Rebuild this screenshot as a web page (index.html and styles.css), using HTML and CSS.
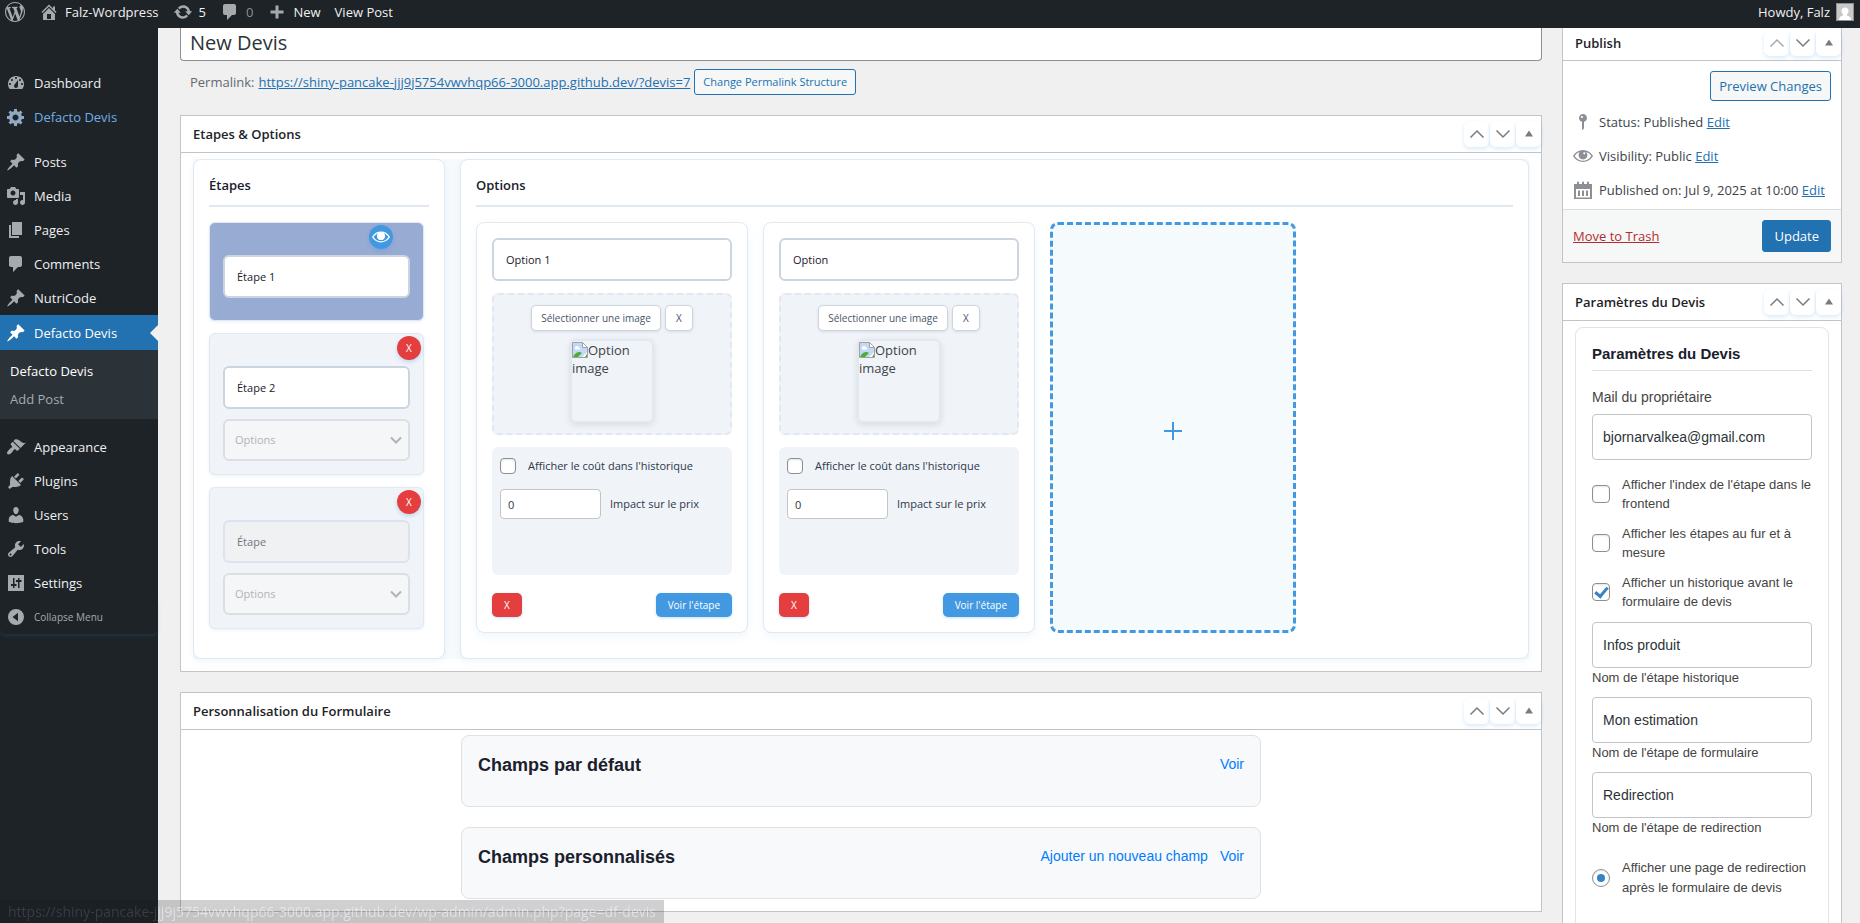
FILE: index.html
```html
<!DOCTYPE html>
<html lang="fr">
<head>
<meta charset="utf-8">
<title>New Devis</title>
<link rel="stylesheet" href="styles.css">
</head>
<body>
<svg class="defs" aria-hidden="true">
  <symbol id="i-wp" viewBox="0 0 20 20"><path d="M20 10c0-5.51-4.49-10-10-10C4.48 0 0 4.49 0 10c0 5.52 4.48 10 10 10 5.51 0 10-4.48 10-10zM7.78 15.37L4.37 6.22c.55-.02 1.17-.08 1.17-.08.5-.06.44-1.13-.06-1.11 0 0-1.45.11-2.37.11-.18 0-.37 0-.58-.01C4.12 2.69 6.87 1.11 10 1.11c2.33 0 4.45.87 6.05 2.34-.68-.11-1.65.39-1.65 1.58 0 .74.45 1.36.9 2.1.35.61.55 1.36.55 2.46 0 1.49-1.4 5-1.4 5l-3.03-8.37c.54-.02.82-.17.82-.17.5-.05.44-1.25-.06-1.22 0 0-1.44.12-2.38.12-.87 0-2.33-.12-2.33-.12-.5-.03-.56 1.2-.06 1.22l.92.08 1.26 3.41zM17.41 10c.24-.64.74-1.87.43-4.25.7 1.29 1.05 2.71 1.05 4.25 0 3.29-1.73 6.24-4.4 7.78.97-2.59 1.94-5.2 2.92-7.78zM6.1 18.09C3.12 16.65 1.11 13.53 1.11 10c0-1.3.23-2.48.72-3.59C3.25 10.3 4.67 14.2 6.1 18.09zm4.03-6.63l2.58 6.98c-.86.29-1.76.45-2.71.45-.79 0-1.57-.11-2.29-.33.81-2.38 1.62-4.74 2.42-7.1z"/></symbol>
  <symbol id="i-home" viewBox="0 0 20 20"><path d="M16 8.5l1.53 1.53-1.06 1.06L10 4.6l-6.47 6.49-1.06-1.06L10 2.5l4 4v-2h2v4zm-6-2.46l6 5.99V18H4v-5.97zM12 17v-5H8v5h4z"/></symbol>
  <symbol id="i-update" viewBox="0 0 20 20"><path d="M10.2 3.28c3.53 0 6.43 2.61 6.92 6h2.08l-3.5 4-3.5-4h2.32c-.45-1.97-2.21-3.45-4.32-3.45-1.45 0-2.73.71-3.54 1.78L4.95 5.66C6.23 4.2 8.11 3.28 10.2 3.28zm-.4 13.44c-3.52 0-6.43-2.61-6.92-6H.8l3.5-4c1.17 1.33 2.33 2.67 3.5 4H5.48c.45 1.97 2.21 3.45 4.32 3.45 1.45 0 2.73-.71 3.54-1.78l1.71 1.95c-1.28 1.46-3.15 2.38-5.25 2.38z"/></symbol>
  <symbol id="i-comment" viewBox="0 0 20 20"><path d="M5 2h9c1.1 0 2 .9 2 2v7c0 1.1-.9 2-2 2h-2l-5 5v-5H5c-1.1 0-2-.9-2-2V4c0-1.1.9-2 2-2z"/></symbol>
  <symbol id="i-plus" viewBox="0 0 20 20"><path d="M8.5 3.5h3v5h5v3h-5v5h-3v-5h-5v-3h5z"/></symbol>
  <symbol id="i-dash" viewBox="0 0 20 20"><path fill-rule="evenodd" d="M3.76 16h12.48c1.1-1.37 1.76-3.11 1.76-5 0-4.42-3.58-8-8-8s-8 3.58-8 8c0 1.89.66 3.63 1.76 5zM10 4c.55 0 1 .45 1 1s-.45 1-1 1-1-.45-1-1 .45-1 1-1zM6 6c.55 0 1 .45 1 1s-.45 1-1 1-1-.45-1-1 .45-1 1-1zm8 0c.55 0 1 .45 1 1s-.45 1-1 1-1-.45-1-1 .45-1 1-1zm-5.37 5.55L12 7v6c0 1.1-.9 2-2 2s-2-.9-2-2c0-.57.24-1.08.63-1.45zM4 10c.55 0 1 .45 1 1s-.45 1-1 1-1-.45-1-1 .45-1 1-1zm12 0c.55 0 1 .45 1 1s-.45 1-1 1-1-.45-1-1 .45-1 1-1z"/></symbol>
  <symbol id="i-gear" viewBox="0 0 20 20"><path fill-rule="evenodd" d="M18 12h-2.18c-.17.7-.44 1.35-.81 1.93l1.54 1.54-2.1 2.1-1.54-1.54c-.58.36-1.23.63-1.91.79V19H8v-2.18c-.68-.16-1.33-.43-1.91-.79l-1.54 1.54-2.12-2.12 1.54-1.54c-.36-.58-.63-1.23-.79-1.91H1V9.03h2.17c.16-.7.44-1.35.8-1.94L2.43 5.55l2.1-2.1 1.54 1.54c.58-.37 1.24-.64 1.93-.81V2h3v2.18c.68.16 1.33.43 1.91.79l1.54-1.54 2.12 2.12-1.54 1.54c.36.59.64 1.24.8 1.94H18V12zm-8.5 1.5c1.66 0 3-1.34 3-3s-1.34-3-3-3-3 1.34-3 3 1.34 3 3 3z"/></symbol>
  <symbol id="i-pin" viewBox="0 0 20 20"><path d="M10.44 3.02l1.82-1.82 6.36 6.35-1.83 1.82c-1.05-.68-2.48-.57-3.41.36l-.75.75c-.92.93-1.04 2.35-.35 3.41l-1.83 1.82-2.41-2.41-2.8 2.79c-.42.42-3.38 2.71-3.8 2.29s1.86-3.39 2.28-3.81l2.79-2.79L4.1 9.36l1.83-1.82c1.05.69 2.48.57 3.4-.36l.75-.75c.93-.92 1.05-2.35.36-3.41z"/></symbol>
  <symbol id="i-media" viewBox="0 0 20 20"><path fill-rule="evenodd" d="M13 11V4c0-.55-.45-1-1-1h-1.67L9 1H5L3.67 3H2c-.55 0-1 .45-1 1v7c0 .55.45 1 1 1h10c.55 0 1-.45 1-1zM7 4.5c1.38 0 2.5 1.12 2.5 2.5S8.38 9.5 7 9.5 4.5 8.38 4.5 7 5.62 4.5 7 4.5zM14 6h5v10.5c0 1.38-1.12 2.5-2.5 2.5S14 17.88 14 16.5s1.12-2.5 2.5-2.5c.17 0 .34.02.5.05V9h-3V6zm-4 8.05V13h2v3.5c0 1.38-1.12 2.5-2.5 2.5S7 17.88 7 16.5 8.12 14 9.5 14c.17 0 .34.02.5.05z"/></symbol>
  <symbol id="i-page" viewBox="0 0 20 20"><path d="M6 15V2h10v13H6zm-1 1h8v2H3V5h2v11z"/></symbol>
  <symbol id="i-brush" viewBox="0 0 20 20"><path d="M14.48 11.06L7.41 3.99l1.5-1.5c.5-.56 2.3-.47 3.51.32 1.21.8 1.43 1.28 2.91 2.1 1.18.64 2.45 1.26 4.45.85zm-.71.71L6.7 4.7 4.93 6.47c-.39.39-.39 1.02 0 1.41l1.06 1.06c.39.39.39 1.03 0 1.42-.6.6-1.43 1.11-2.21 1.69-.35.26-.7.53-1.01.84C1.43 14.23.4 16.08 1.4 17.07c.99 1 2.84-.03 4.18-1.36.31-.31.58-.66.85-1.02.57-.78 1.08-1.61 1.69-2.21.39-.39 1.02-.39 1.41 0l1.06 1.06c.39.39 1.02.39 1.41 0z"/></symbol>
  <symbol id="i-plug" viewBox="0 0 20 20"><path d="M13.11 4.36L9.87 7.6 8 5.73l3.24-3.24c.35-.34 1.05-.2 1.56.32.52.51.66 1.21.31 1.55zm-8 1.77l.91-1.12 9.01 9.01-1.19.84c-.71.71-2.63 1.16-3.82 1.16H6.14L4.9 17.26c-.59.59-1.54.59-2.12 0-.59-.58-.59-1.53 0-2.12l1.24-1.24v-3.88c0-1.13.4-3.19 1.09-3.89zm7.26 3.97l3.24-3.24c.34-.35 1.04-.21 1.55.31.52.51.66 1.21.31 1.55l-3.24 3.25z"/></symbol>
  <symbol id="i-user" viewBox="0 0 20 20"><path d="M10 9.25c-2.27 0-2.73-3.44-2.73-3.44C7 4.02 7.82 2 9.97 2c2.16 0 2.98 2.02 2.71 3.81 0 0-.41 3.44-2.68 3.44zm0 2.57L12.72 10c2.39 0 4.52 2.33 4.52 4.53v2.49s-3.65 1.13-7.24 1.13c-3.65 0-7.24-1.13-7.24-1.13v-2.49c0-2.25 1.94-4.48 4.47-4.48z"/></symbol>
  <symbol id="i-tool" viewBox="0 0 20 20"><path fill-rule="evenodd" d="M16.68 9.77c-1.34 1.34-3.3 1.67-4.95.99l-5.41 6.52c-.99.99-2.59.99-3.58 0s-.99-2.59 0-3.57l6.52-5.42c-.68-1.65-.35-3.61.99-4.95 1.28-1.28 3.12-1.62 4.72-1.06l-2.89 2.89 2.82 2.82 2.86-2.87c.53 1.58.18 3.39-1.08 4.65zM3.81 16.21c.4.39 1.04.39 1.43 0 .4-.4.4-1.04 0-1.43-.39-.4-1.03-.4-1.43 0-.39.39-.39 1.03 0 1.43z"/></symbol>
  <symbol id="i-sliders" viewBox="0 0 20 20"><path fill-rule="evenodd" d="M2 2h16v16H2zM7 5v6H5v2h2v2h1.500v-2h2v-2h-2V5zm5 0v2h-2v2h2v6h1.500V9h2V7h-2V5z"/></symbol>
  <symbol id="i-collapse" viewBox="0 0 20 20"><path fill-rule="evenodd" d="M10 2a8 8 0 1 0 0 16 8 8 0 0 0 0-16zm2 3.800v8.400L6.500 10z"/></symbol>
  <symbol id="i-status" viewBox="0 0 20 20"><path fill-rule="evenodd" d="M14 6c0 1.860-1.280 3.410-3 3.860V16c0 1-2 2-2 2V9.860c-1.720-.45-3-2-3-3.860 0-2.210 1.790-4 4-4s4 1.790 4 4zM8 5c0 .55.45 1 1 1s1-.45 1-1-.45-1-1-1-1 .45-1 1z"/></symbol>
  <symbol id="i-eye" viewBox="0 0 20 20"><path fill-rule="evenodd" d="M19.7 9.400C17.700 6 14 3.900 10 3.900S2.300 6 .3 9.400L0 10l.3.600c2 3.400 5.700 5.500 9.700 5.500s7.700-2.100 9.700-5.500l.3-.6zM10 14.700c-3.300 0-6.500-1.700-8.300-4.700C3 7.900 5 6.400 7.200 5.700A4.300 4.300 0 1 0 12.800 5.700C15 6.400 17 7.900 18.300 10c-1.800 3-5 4.700-8.300 4.700z"/><circle cx="10" cy="9" r="4.300"/><circle cx="11.300" cy="7.300" r="1.100" class="glint"/></symbol>
  <symbol id="i-cal" viewBox="0 0 20 20"><path fill-rule="evenodd" d="M1 4h3V2.500a1 1 0 0 1 2 0V4h3V2.500a1 1 0 0 1 2 0V4h3V2.500a1 1 0 0 1 2 0V4h3v15H1zm2 5v8.500h14V9zm2 1.500h2V16H5zm4 0h2V16H9zm4 0h2V16h-2z"/></symbol>
  <symbol id="i-up" viewBox="0 0 16 16"><path class="line" d="M1.500 11.500 8 5l6.500 6.500"/></symbol>
  <symbol id="i-down" viewBox="0 0 16 16"><path class="line" d="M1.500 4.500 8 11l6.500-6.500"/></symbol>
  <symbol id="i-tri" viewBox="0 0 16 16"><path d="M4 10.500h8L8 4.500z"/></symbol>
  <symbol id="i-chev" viewBox="0 0 14 14"><path class="thick" d="m2 4.500 5 5 5-5"/></symbol>
  <symbol id="i-broken" viewBox="0 0 16 16"><path fill="#fff" stroke="#a0a0a0" d="M.5.500h10l5 5v10H.5z"/><path fill="#c3d9f7" d="M1 1h9v5h5v4l-5 5H1z"/><path fill="#fff" stroke="#a0a0a0" d="M10.500.500v5h5z"/><path fill="#fff" d="M3 6.500a2 2 0 0 1 4-1 1.500 1.500 0 0 1 1 2H3z"/><path fill="#4caf32" d="M1 15c2-4 4-5 7-5l2 1-4 4z"/><path fill="#4caf32" d="M13 15h2v-3z"/></symbol>
</svg>

<header class="adminbar">
  <a href="#" aria-label="WordPress"><svg class="ico"><use href="#i-wp"/></svg></a>
  <a href="#"><svg class="ico"><use href="#i-home"/></svg>Falz-Wordpress</a>
  <a href="#"><svg class="ico"><use href="#i-update"/></svg>5</a>
  <a href="#" class="dim"><svg class="ico"><use href="#i-comment"/></svg>0</a>
  <a href="#"><svg class="ico"><use href="#i-plus"/></svg>New</a>
  <a href="#">View Post</a>
  <a href="#" class="account">Howdy, Falz<svg class="avatar" viewBox="0 0 18 18"><rect width="18" height="18" fill="#8c8f94"/><path fill="#c8c8c8" d="M1 1h16v16H1z"/><circle cx="9" cy="8" r="3.500" fill="#fff"/><path fill="#fff" d="M3 17c0-3 2-4 4-4.500V10h4v2.500c2 .5 4 1.500 4 4.500z"/></svg></a>
</header>

<div class="shell">
  <nav class="sidebar" aria-label="Menu">
    <ul class="menu">
      <li><a href="#"><svg class="ico"><use href="#i-dash"/></svg>Dashboard</a></li>
      <li><a href="#" class="hover"><svg class="ico"><use href="#i-gear"/></svg>Defacto Devis</a></li>
      <li class="gap"><a href="#"><svg class="ico"><use href="#i-pin"/></svg>Posts</a></li>
      <li><a href="#"><svg class="ico"><use href="#i-media"/></svg>Media</a></li>
      <li><a href="#"><svg class="ico"><use href="#i-page"/></svg>Pages</a></li>
      <li><a href="#"><svg class="ico"><use href="#i-comment"/></svg>Comments</a></li>
      <li><a href="#"><svg class="ico"><use href="#i-pin"/></svg>NutriCode</a></li>
      <li><a href="#" class="current"><svg class="ico"><use href="#i-pin"/></svg>Defacto Devis</a>
        <ul class="submenu"><li><a href="#" class="on">Defacto Devis</a></li><li><a href="#">Add Post</a></li></ul></li>
      <li class="gap"><a href="#"><svg class="ico"><use href="#i-brush"/></svg>Appearance</a></li>
      <li><a href="#"><svg class="ico"><use href="#i-plug"/></svg>Plugins</a></li>
      <li><a href="#"><svg class="ico"><use href="#i-user"/></svg>Users</a></li>
      <li><a href="#"><svg class="ico"><use href="#i-tool"/></svg>Tools</a></li>
      <li><a href="#"><svg class="ico"><use href="#i-sliders"/></svg>Settings</a></li>
    </ul>
    <button type="button" class="collapse"><svg class="ico"><use href="#i-collapse"/></svg>Collapse Menu</button>
  </nav>

  <main class="content">
    <div class="primary">
      <input class="title" type="text" value="New Devis" aria-label="Title">
      <div class="permalink"><span>Permalink:</span> <a href="#">https://shiny-pancake-jjj9j5754vwvhqp66-3000.app.github.dev/?devis=7</a> <button type="button" class="btn small">Change Permalink Structure</button></div>

      <section class="box">
        <div class="box-head"><h2>Etapes &amp; Options</h2>
          <div class="tools"><button type="button" aria-label="Monter"><svg><use href="#i-up"/></svg></button><button type="button" aria-label="Descendre"><svg><use href="#i-down"/></svg></button><button type="button" aria-label="Replier"><svg><use href="#i-tri"/></svg></button></div></div>
        <div class="builder">
          <div class="panel steps">
            <h3>Étapes</h3>
            <div class="step active"><button type="button" class="round view" aria-label="Voir"><svg><use href="#i-eye"/></svg></button>
              <input type="text" class="field" value="Étape 1" aria-label="Étape 1"></div>
            <div class="step"><button type="button" class="round del">X</button>
              <input type="text" class="field" value="Étape 2" aria-label="Étape 2">
              <div class="pick"><select disabled aria-label="Options étape 2"><option>Options</option></select><svg><use href="#i-chev"/></svg></div></div>
            <div class="step"><button type="button" class="round del">X</button>
              <input type="text" class="field" value="Étape" disabled aria-label="Étape 3">
              <div class="pick"><select disabled aria-label="Options étape 3"><option>Options</option></select><svg><use href="#i-chev"/></svg></div></div>
          </div>
          <div class="panel options">
            <h3>Options</h3>
            <div class="cards">
              <article class="card">
                <input type="text" class="field" value="Option 1" aria-label="Nom de l'option 1">
                <div class="media">
                  <div class="media-btns"><button type="button">Sélectionner une image</button><button type="button">X</button></div>
                  <div class="thumb"><svg><use href="#i-broken"/></svg>Option image</div>
                </div>
                <div class="info">
                  <label class="cost"><input type="checkbox" class="tick">Afficher le coût dans l'historique</label>
                  <label class="price"><input type="text" value="0">Impact sur le prix</label>
                </div>
                <div class="actions"><button type="button" class="red">X</button><button type="button" class="blue">Voir l'étape</button></div>
              </article>
              <article class="card">
                <input type="text" class="field" value="Option" aria-label="Nom de l'option 2">
                <div class="media">
                  <div class="media-btns"><button type="button">Sélectionner une image</button><button type="button">X</button></div>
                  <div class="thumb"><svg><use href="#i-broken"/></svg>Option image</div>
                </div>
                <div class="info">
                  <label class="cost"><input type="checkbox" class="tick">Afficher le coût dans l'historique</label>
                  <label class="price"><input type="text" value="0">Impact sur le prix</label>
                </div>
                <div class="actions"><button type="button" class="red">X</button><button type="button" class="blue">Voir l'étape</button></div>
              </article>
              <button type="button" class="add" aria-label="Ajouter une option"><svg viewBox="0 0 18 18"><path d="M9 0v18M0 9h18"/></svg></button>
            </div>
          </div>
        </div>
      </section>

      <section class="box">
        <div class="box-head"><h2>Personnalisation du Formulaire</h2>
          <div class="tools"><button type="button" aria-label="Monter"><svg><use href="#i-up"/></svg></button><button type="button" aria-label="Descendre"><svg><use href="#i-down"/></svg></button><button type="button" aria-label="Replier"><svg><use href="#i-tri"/></svg></button></div></div>
        <div class="form-groups">
          <div class="group"><h3>Champs par défaut</h3><a href="#">Voir</a></div>
          <div class="group"><h3>Champs personnalisés</h3><a href="#">Ajouter un nouveau champ</a><a href="#">Voir</a></div>
        </div>
      </section>
    </div>

    <aside class="secondary">
      <section class="box publish">
        <div class="box-head"><h2>Publish</h2>
          <div class="tools"><button type="button" class="faded" aria-label="Monter"><svg><use href="#i-up"/></svg></button><button type="button" aria-label="Descendre"><svg><use href="#i-down"/></svg></button><button type="button" aria-label="Replier"><svg><use href="#i-tri"/></svg></button></div></div>
        <div class="preview"><button type="button" class="btn">Preview Changes</button></div>
        <ul class="facts">
          <li><svg class="ico"><use href="#i-status"/></svg><span>Status: Published <a href="#">Edit</a></span></li>
          <li><svg class="ico"><use href="#i-eye"/></svg><span>Visibility: Public <a href="#">Edit</a></span></li>
          <li><svg class="ico"><use href="#i-cal"/></svg><span>Published on: Jul 9, 2025 at 10:00 <a href="#">Edit</a></span></li>
        </ul>
        <div class="publish-foot"><a href="#">Move to Trash</a><button type="button" class="btn primary-btn">Update</button></div>
      </section>

      <section class="box">
        <div class="box-head"><h2>Paramètres du Devis</h2>
          <div class="tools"><button type="button" aria-label="Monter"><svg><use href="#i-up"/></svg></button><button type="button" aria-label="Descendre"><svg><use href="#i-down"/></svg></button><button type="button" aria-label="Replier"><svg><use href="#i-tri"/></svg></button></div></div>
        <div class="settings">
          <h3>Paramètres du Devis</h3>
          <label class="mail" for="mail">Mail du propriétaire</label>
          <input type="text" id="mail" class="text" value="bjornarvalkea@gmail.com">
          <div class="checks">
            <label class="check"><input type="checkbox" class="tick"><span>Afficher l'index de l'étape dans le frontend</span></label>
            <label class="check"><input type="checkbox" class="tick"><span>Afficher les étapes au fur et à mesure</span></label>
            <label class="check"><input type="checkbox" class="tick" checked><span>Afficher un historique avant le formulaire de devis</span></label>
          </div>
          <div class="named"><input type="text" id="n1" class="text" value="Infos produit"><label for="n1">Nom de l'étape historique</label></div>
          <div class="named"><input type="text" id="n2" class="text" value="Mon estimation"><label for="n2">Nom de l'étape de formulaire</label></div>
          <div class="named"><input type="text" id="n3" class="text" value="Redirection"><label for="n3">Nom de l'étape de redirection</label></div>
          <div class="radios">
            <label class="check"><input type="radio" name="end" class="dot" checked><span>Afficher une page de redirection après le formulaire de devis</span></label>
            <label class="check"><input type="radio" name="end" class="dot"><span>Rediriger vers la page</span></label>
          </div>
        </div>
      </section>
    </aside>
  </main>
</div>
<div class="statusbar">https://shiny-pancake-jjj9j5754vwvhqp66-3000.app.github.dev/wp-admin/admin.php?page=df-devis</div>
</body>
</html>
```
FILE: styles.css
```css
* { box-sizing: border-box; }
body {
  margin: 0;
  height: 100vh;
  overflow: hidden;
  display: flex;
  flex-direction: column;
  background: #f0f0f1;
  color: #3c434a;
  font: 13px/18px "Open Sans", "Noto Sans", sans-serif;
}
ul { list-style: none; margin: 0; padding: 0; }
h2, h3 { margin: 0; }
button, input, select { font: inherit; color: inherit; margin: 0; }
button { cursor: pointer; }
a { color: #2271b1; }
svg { display: block; flex: none; fill: currentColor; }
.defs { position: absolute; width: 0; height: 0; }
.ico { width: 20px; height: 20px; }
.glint { fill: #fff; }
.line { fill: none; stroke: currentColor; stroke-width: 1.5; }
.thick { fill: none; stroke: currentColor; stroke-width: 2; }

/* Top bar */
.adminbar {
  flex: none;
  height: 28px;
  display: flex;
  gap: 14px;
  padding: 0 6px 4px 5px;
  background: #1d2327;
}
.adminbar a { display: flex; align-items: center; gap: 6px; color: #f0f0f1; text-decoration: none; }
.adminbar .ico { color: #a7aaad; }
.adminbar .dim { color: #8c8f94; }
.adminbar .account { margin-left: auto; }
.avatar { width: 18px; height: 18px; }

.shell { flex: 1; min-height: 0; display: flex; }

/* Side menu */
.sidebar { flex: none; width: 158px; padding-top: 38px; background: #1d2327; }
.menu > li > a, .collapse {
  position: relative;
  display: flex;
  align-items: center;
  gap: 8px;
  height: 34px;
  padding: 0 6px;
  color: #f0f0f1;
  text-decoration: none;
}
.menu .ico, .collapse .ico { color: #a7aaad; }
.menu .gap { margin-top: 11px; }
.menu > li > a.hover { color: #72aee6; }
.menu .hover .ico { color: #8fa8c4; }
.menu > li > a.current { height: 35px; background: #2271b1; color: #fff; }
.menu .current .ico { color: #fff; }
.current::after {
  content: "";
  position: absolute;
  right: 0;
  top: 10px;
  border: 8px solid transparent;
  border-left: 0;
  border-right-color: #f0f0f1;
}
.submenu { padding: 7px 0 6px; background: #2c3338; }
.submenu a { display: block; padding: 5px 10px; color: #a7aaad; text-decoration: none; }
.submenu .on { color: #fff; }
.collapse {
  width: 100%;
  border: 0;
  border-radius: 0 0 6px 6px;
  background: none;
  color: #a7aaad;
  font-size: 10px;
  box-shadow: 0 2px 4px rgba(66, 153, 225, .15);
}

/* Page columns */
.content { flex: 1; min-width: 0; display: flex; align-items: flex-start; gap: 20px; padding: 0 18px 0 22px; }
.primary { flex: 1; min-width: 0; }
.secondary { flex: none; width: 280px; }

.title {
  display: block;
  width: 100%;
  height: 33px;
  padding: 0 9px 4px;
  border: 1px solid #8c8f94;
  border-top: 0;
  border-radius: 0 0 4px 4px;
  background: #fff;
  color: #2c3338;
  font-size: 20px;
}
.permalink { display: flex; align-items: center; gap: 4px; height: 42px; margin-bottom: 12px; padding-left: 10px; color: #646970; }

.btn {
  height: 30px;
  padding: 0 8px;
  border: 1px solid #2271b1;
  border-radius: 3px;
  background: #f6f7f7;
  color: #2271b1;
}
.btn.small { height: 26px; font-size: 11px; }
.btn.primary-btn { height: 32px; padding: 0 11px; background: #2271b1; color: #fff; }

/* Meta boxes */
.box { margin-bottom: 20px; border: 1px solid #c3c4c7; background: #fff; }
.box-head {
  display: flex;
  align-items: center;
  justify-content: space-between;
  height: 37px;
  padding-left: 12px;
  border-bottom: 1px solid #c3c4c7;
}
.box-head h2 { color: #1d2327; font-size: 13px; font-weight: 600; }
.tools { display: flex; gap: 1px; }
.tools button {
  display: grid;
  place-items: center;
  width: 25px;
  height: 26px;
  padding: 0;
  border: 0;
  border-radius: 6px;
  background: #fff;
  color: #787c82;
  box-shadow: 0 2px 4px rgba(66, 153, 225, .2);
}
.tools svg { width: 16px; height: 16px; }
.tools .faded { color: #a7aaad; }

/* Builder */
.builder { display: flex; gap: 15px; margin: 6px 12px 12px; background: #f7fafc; }
.panel {
  padding: 15px;
  border: 1px solid #e2e8f0;
  border-radius: 8px;
  background: #fff;
  box-shadow: 0 2px 6px rgba(66, 153, 225, .1);
}
.panel h3 {
  margin-bottom: 15px;
  padding-bottom: 10px;
  border-bottom: 2px solid #e2e8f0;
  color: #1a202c;
  font-size: 13px;
  line-height: 20px;
  font-weight: 600;
}
.steps { flex: none; width: 252px; min-height: 500px; }
.options { flex: 1; min-width: 0; }
.step {
  position: relative;
  display: flex;
  flex-direction: column;
  gap: 10px;
  width: 215px;
  margin-bottom: 12px;
  padding: 32px 13px 13px;
  border: 1px solid #e2e8f0;
  border-radius: 6px;
  background: #f0f4f9;
  box-shadow: 0 1px 3px rgba(66, 153, 225, .12);
}
.step.active { background: #98abd3; padding-bottom: 22px; }
.field {
  width: 100%;
  height: 43px;
  padding: 0 12px;
  border: 2px solid #cbd5e0;
  border-radius: 6px;
  background: #fff;
  color: #1a202c;
  font-size: 11px;
}
.field:disabled { border-color: #dbe4ee; background: #f0f1f3; color: #6f7780; }
.pick { position: relative; color: #b0b4b8; }
.pick select {
  display: block;
  width: 100%;
  height: 42px;
  padding: 0 10px;
  border: 2px solid #dcdfe2;
  border-radius: 6px;
  background: #f5f6f8;
  appearance: none;
  opacity: 1;
  color: #b0b4b8;
  font-size: 11px;
}
.pick svg { position: absolute; right: 7px; top: 14px; width: 14px; height: 14px; }
.round {
  position: absolute;
  top: 2px;
  right: 2px;
  display: grid;
  place-items: center;
  width: 24px;
  height: 24px;
  padding: 0;
  border: 0;
  border-radius: 50%;
  color: #fff;
  font-size: 10px;
  box-shadow: 0 2px 4px rgba(66, 153, 225, .3);
}
.round svg { width: 18px; height: 18px; }
.round.del { background: #e53e3e; }
.round.view { right: 30px; background: #4299e1; }
.view .glint { fill: #4299e1; }

.cards { display: flex; gap: 15px; }
.card {
  width: 272px;
  padding: 15px;
  border: 1px solid #e2e8f0;
  border-radius: 8px;
  background: #fff;
  box-shadow: 0 4px 8px rgba(66, 153, 225, .08);
}
.media {
  display: flex;
  flex-direction: column;
  align-items: center;
  gap: 8px;
  margin: 12px 0;
  padding: 10px;
  border: 2px dashed #e2e8f0;
  border-radius: 6px;
  background: #f0f4f9;
}
.media-btns { display: flex; gap: 4px; }
.media-btns button {
  min-width: 28px;
  height: 26px;
  padding: 0 9px;
  border: 1px solid #cbd5e0;
  border-radius: 5px;
  background: #fff;
  color: #4a5568;
  font-size: 10px;
  box-shadow: 0 1px 3px rgba(0, 0, 0, .1);
}
.thumb {
  width: 84px;
  height: 84px;
  border: 2px solid #e2e8f0;
  border-radius: 6px;
  box-shadow: 0 2px 6px rgba(0, 0, 0, .1);
}
.thumb svg { display: inline-block; width: 16px; height: 16px; vertical-align: -3px; }
.info { height: 128px; padding: 10px 8px; border-radius: 6px; background: #f0f4f9; color: #2d3748; font-size: 11px; }
.cost { display: flex; align-items: center; gap: 12px; margin-bottom: 14px; }
.price { display: flex; align-items: center; gap: 9px; }
.price input { width: 101px; height: 30px; padding: 0 7px; border: 1px solid #c3c4c7; border-radius: 4px; background: #fff; }
.actions { display: flex; justify-content: space-between; margin-top: 18px; }
.actions button {
  min-width: 30px;
  height: 24px;
  padding: 0 12px;
  border: 0;
  border-radius: 5px;
  color: #fff;
  font-size: 10px;
  box-shadow: 0 1px 3px rgba(66, 153, 225, .3);
}
.actions .red { background: #e53e3e; }
.actions .blue { background: #4299e1; }
.add {
  display: grid;
  place-items: center;
  width: 246px;
  padding: 6px 0 0;
  border: 3px dashed #4299e1;
  border-radius: 8px;
  background: #f5fafd;
  color: #4299e1;
}
.add svg { width: 18px; height: 18px; stroke: currentColor; stroke-width: 2; }

/* Check boxes and radios */
.tick, .dot {
  flex: none;
  display: grid;
  place-items: center;
  width: 16px;
  height: 16px;
  border: 1px solid #8c8f94;
  border-radius: 4px;
  background: #fff;
  appearance: none;
  box-shadow: inset 0 1px 2px rgba(0, 0, 0, .1);
}
.dot { border-radius: 50%; }
.check .tick, .check .dot { width: 18px; height: 18px; }
.tick:checked::before {
  content: "";
  width: 10px;
  height: 5px;
  margin-bottom: 3px;
  border: solid #3582c4;
  border-width: 0 0 3px 3px;
  transform: rotate(-50deg);
}
.dot:checked::before { content: ""; width: 8px; height: 8px; border-radius: 50%; background: #3582c4; }

/* Form groups */
.form-groups { display: flex; flex-direction: column; gap: 20px; max-width: 800px; margin: 5px auto 12px; font: 14px/20px "Liberation Sans", Arial, sans-serif; }
.group {
  display: flex;
  align-items: flex-start;
  gap: 12px;
  height: 72px;
  padding: 18px 16px;
  border: 1px solid #dee2e6;
  border-radius: 8px;
  background: #f8f9fa;
}
.group h3 { flex: 1; color: #1a202c; font-size: 18px; line-height: 22px; }
.group a { color: #007bff; text-decoration: none; }

/* Publish */
.publish { border-top: 0; }
.publish .box-head { height: 33px; padding-bottom: 2px; }
.preview { display: flex; justify-content: flex-end; padding: 10px 10px 4px; }
.facts li { display: flex; align-items: center; gap: 6px; height: 34px; padding: 0 10px; }
.facts { padding-bottom: 2px; }
.facts .ico { color: #8c8f94; }
.publish-foot {
  display: flex;
  align-items: center;
  justify-content: space-between;
  height: 53px;
  padding: 0 10px;
  border-top: 1px solid #dcdcde;
  background: #f6f7f7;
}
.publish-foot a { color: #b32d2e; }

/* Settings */
.settings {
  margin: 6px 12px 12px;
  padding: 16px;
  border: 1px solid #e2e4e7;
  border-radius: 8px;
  color: #444;
  font: 13px/19px "Liberation Sans", Arial, sans-serif;
}
.settings h3 { padding-bottom: 6px; border-bottom: 1px solid #dcdfe3; color: #1a202c; font-size: 15px; line-height: 20px; }
.mail { display: block; margin: 16px 0 7px; font-size: 14px; line-height: 20px; }
.text {
  display: block;
  width: 100%;
  height: 46px;
  padding: 0 10px;
  border: 1px solid #c3c4c7;
  border-radius: 4px;
  background: #fff;
  color: #2c3338;
  font-size: 14px;
}
.checks { display: flex; flex-direction: column; gap: 11px; margin: 15px 0 11px; }
.check { display: flex; align-items: center; gap: 12px; }
.named { margin-bottom: 9px; }
.named label { display: block; line-height: 20px; }
.radios { display: flex; flex-direction: column; gap: 20px; margin-top: 20px; line-height: 20px; }
.radios .check { min-height: 40px; }
.radios span { align-self: flex-start; }

/* Link target hint */
.statusbar {
  position: fixed;
  left: 0;
  bottom: 0;
  height: 23px;
  padding: 0 8px;
  background:
    linear-gradient(90deg, rgba(235, 235, 245, .15) 158px, rgba(242, 242, 250, .65) 158px) text,
    rgba(20, 20, 25, .2);
  color: transparent;
  font: 14px/24px "Open Sans", "Noto Sans", sans-serif;
}
```
